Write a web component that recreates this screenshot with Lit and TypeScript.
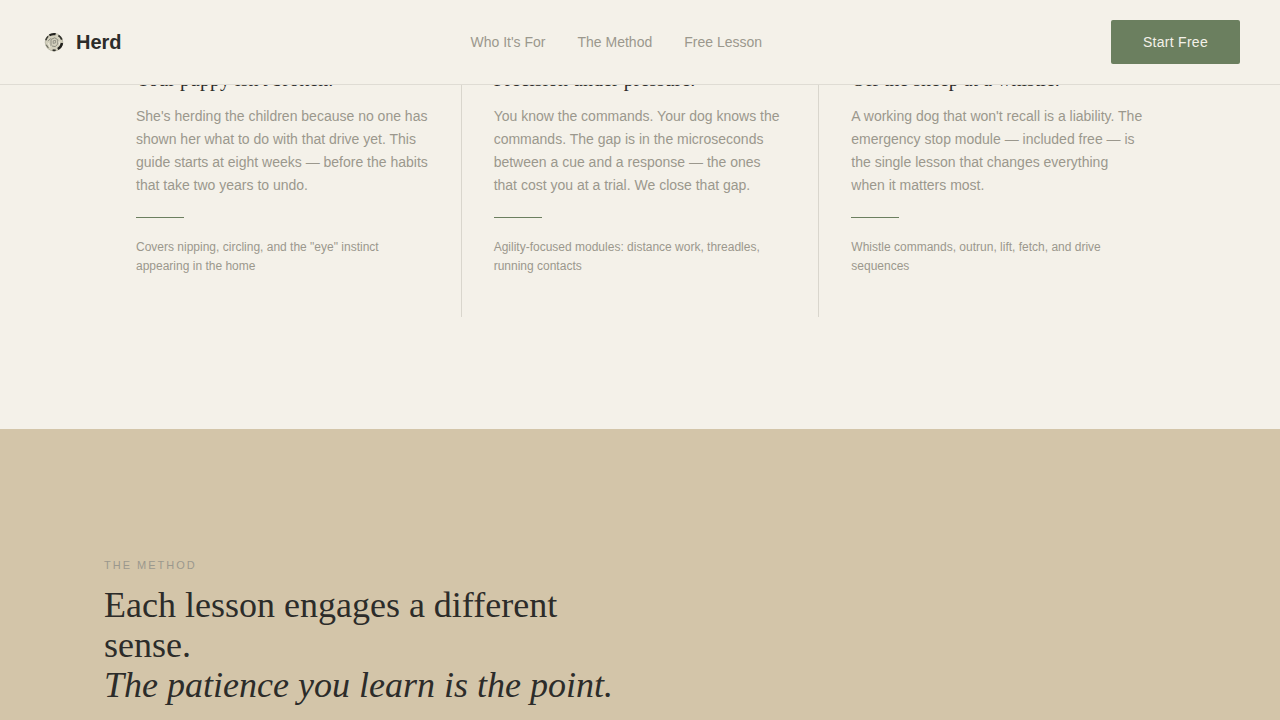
import { LitElement, html, css, svg } from "lit";
import { customElement } from "lit/decorators.js";

const NAV = [
  { label: "Who It's For", href: "#who" },
  { label: "The Method", href: "#method" },
  { label: "Free Lesson", href: "#lesson" },
];

const AUDIENCES = [
  {
    title: "Your puppy isn't broken.",
    body: "She's herding the children because no one has shown her what to do with that drive yet. This guide starts at eight weeks — before the habits that take two years to undo.",
    note: 'Covers nipping, circling, and the "eye" instinct appearing in the home',
  },
  {
    title: "Precision under pressure.",
    body: "You know the commands. Your dog knows the commands. The gap is in the microseconds between a cue and a response — the ones that cost you at a trial. We close that gap.",
    note: "Agility-focused modules: distance work, threadles, running contacts",
  },
  {
    title: "Off the sheep at a whistle.",
    body: "A working dog that won't recall is a liability. The emergency stop module — included free — is the single lesson that changes everything when it matters most.",
    note: "Whistle commands, outrun, lift, fetch, and drive sequences",
  },
];

@customElement("herd-logo")
export class HerdLogo extends LitElement {
  static styles = css`
    :host {
      display: block;
      width: 28px;
      height: 28px;
    }
    .mark {
      display: block;
      width: 100%;
      height: 100%;
    }
  `;

  render() {
    return html`<svg class="mark" viewBox="0 0 28 28" fill="none" aria-hidden="true">
      ${svg`
        <circle cx="14" cy="14.2" r="8.8" fill="#d3d0bd" stroke="#b3b1a0" stroke-width="0.8" />
        <path d="M5.8 12.2A8.5 8.5 0 0 1 8.2 8.2" stroke="#3a3a34" stroke-width="1.5" />
        <path d="M9.4 7.4A8.4 8.4 0 0 1 15.6 6.2" stroke="#22221f" stroke-width="2.2" />
        <path d="M18.4 7.4A8 8 0 0 1 21.8 11.6" stroke="#30302b" stroke-width="1.7" />
        <path d="M22 15A8.2 8.2 0 0 1 17.8 21" stroke="#20201d" stroke-width="2.4" />
        <path d="M15.6 22.2A8 8 0 0 1 12.6 22.2" stroke="#30302b" stroke-width="1.8" />
        <path d="M6.2 16.8L8.4 20" stroke="#6a6a5e" stroke-width="1.1" />
        <path d="M8 13.2L10.6 10.4M11 17.8V11.4L14.8 9.8L17.8 11.8V16L15.2 18.6L12 18" stroke="#8c8c80" stroke-width="1" />
        <path d="M13.2 15.4V12.8L15.6 12.4V14.8Z" stroke="#838378" stroke-width="0.8" />
        <path d="M8.4 15.2L10 19.4M18.8 13.4L19.6 16.6" stroke="#f0eddf" stroke-width="1" />
      `}
    </svg>`;
  }
}

@customElement("app-root")
export class AppRoot extends LitElement {
  static styles = css`
    :host {
      display: flex;
      flex-direction: column;
      min-height: 100vh;
      background: #f4f1e9;
      color: #2c2c2a;
      font-family: "Liberation Sans", Arial, sans-serif;
    }
    * {
      box-sizing: border-box;
    }
    h2,
    h3,
    p {
      margin: 0;
      font-weight: 400;
    }
    a {
      color: inherit;
      text-decoration: none;
    }
    .header {
      position: fixed;
      top: 0;
      left: 0;
      right: 0;
      z-index: 1;
      display: flex;
      align-items: center;
      justify-content: space-between;
      padding: 20px 40px;
      background: #f4f1e9;
      border-bottom: 1px solid #dfdcd4;
    }
    .brand {
      display: flex;
      align-items: center;
      gap: 8px;
      font-size: 20px;
      line-height: 28px;
      font-weight: 700;
    }
    .nav {
      display: flex;
      gap: 32px;
      font-size: 14px;
      line-height: 20px;
      color: #9b988d;
    }
    .cta {
      height: 44px;
      padding: 0 32px;
      border: 0;
      border-radius: 2px;
      background: #6b7f5f;
      color: #f4f1e9;
      font: inherit;
      font-size: 14px;
      letter-spacing: 0.02em;
      cursor: pointer;
    }
    .audiences {
      padding: 65px 104px 112px;
    }
    .columns {
      display: grid;
      grid-template-columns: repeat(3, 1fr);
      gap: 1px;
      background: #d9d6cd;
    }
    .card {
      padding: 0 32px 41px;
      background: #f4f1e9;
    }
    .card-title {
      font-family: "Liberation Serif", "Times New Roman", serif;
      font-size: 20px;
      line-height: 28px;
      margin-bottom: 12px;
    }
    .card-body {
      font-size: 14px;
      line-height: 23px;
      color: #9b988d;
    }
    .rule {
      width: 48px;
      height: 1px;
      margin: 20px 0;
      border: 0;
      background: #6b7f5f;
    }
    .card-note {
      font-size: 12px;
      line-height: 19px;
      color: #9b988d;
    }
    .method {
      flex: 1;
      padding: 128px 104px 14px;
      background: #d3c5a9;
    }
    .eyebrow {
      font-size: 11px;
      line-height: 16px;
      letter-spacing: 2px;
      text-transform: uppercase;
      color: #9b988d;
      margin-bottom: 12px;
    }
    .headline {
      max-width: 512px;
      font-family: "Liberation Serif", "Times New Roman", serif;
      font-size: 36px;
      line-height: 40px;
    }
    .emphasis {
      display: block;
    }
  `;

  render() {
    return html`
      <header class="header">
        <a class="brand" href="#top"><herd-logo></herd-logo>Herd</a>
        <nav class="nav">
          ${NAV.map((item) => html`<a href=${item.href}>${item.label}</a>`)}
        </nav>
        <button class="cta" type="button">Start Free</button>
      </header>
      <section class="audiences" id="who">
        <div class="columns">
          ${AUDIENCES.map(
            (a) => html`
              <article class="card">
                <h3 class="card-title">${a.title}</h3>
                <p class="card-body">${a.body}</p>
                <hr class="rule" />
                <p class="card-note">${a.note}</p>
              </article>
            `
          )}
        </div>
      </section>
      <section class="method" id="method">
        <p class="eyebrow">The Method</p>
        <h2 class="headline">
          Each lesson engages a different sense.
          <em class="emphasis">The patience you learn is the point.</em>
        </h2>
      </section>
    `;
  }
}
